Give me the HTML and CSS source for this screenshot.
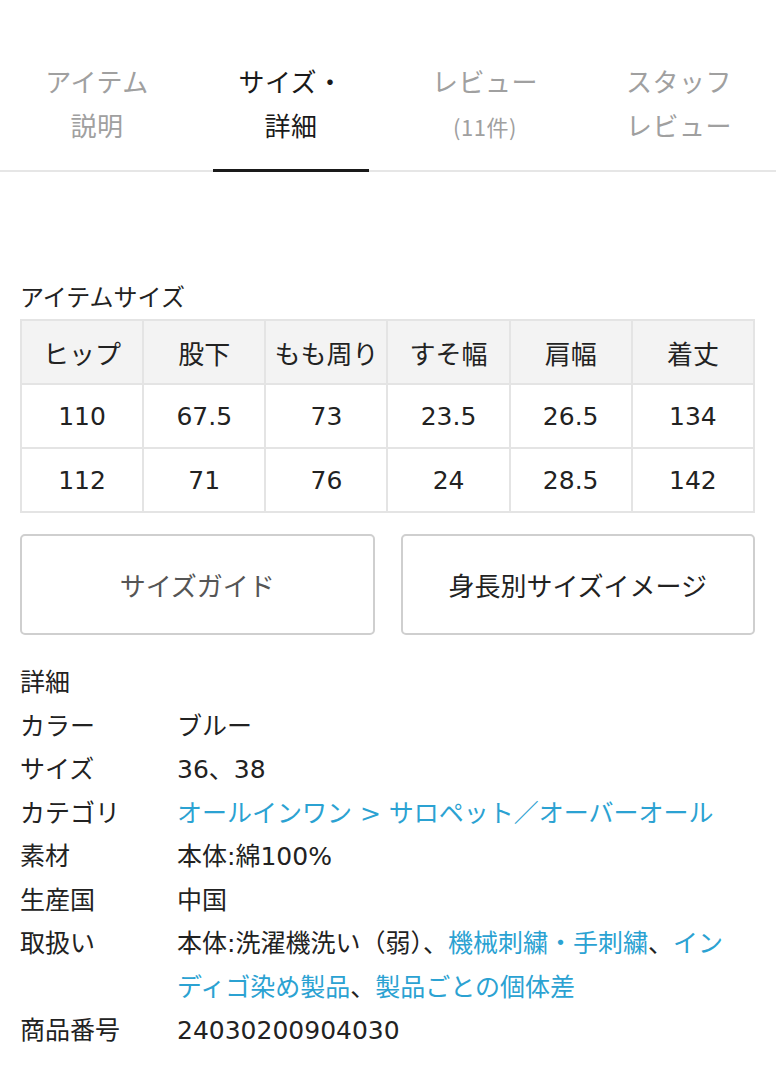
FILE: index.html
```html
<!DOCTYPE html>
<html lang="ja">
<head>
<meta charset="utf-8">
<title>サイズ・詳細</title>
<link rel="stylesheet" href="styles.css">
</head>
<body>
<nav class="tabs">
  <div class="tab">アイテム<br>説明</div>
  <div class="tab active">サイズ・<br>詳細</div>
  <div class="tab">レビュー<br><span class="count">(11件)</span></div>
  <div class="tab">スタッフ<br>レビュー</div>
</nav>

<section class="sizes">
  <h2 class="heading">アイテムサイズ</h2>
  <table class="size-table">
    <thead>
      <tr><th>ヒップ</th><th>股下</th><th>もも周り</th><th>すそ幅</th><th>肩幅</th><th>着丈</th></tr>
    </thead>
    <tbody>
      <tr><td>110</td><td>67.5</td><td>73</td><td>23.5</td><td>26.5</td><td>134</td></tr>
      <tr><td>112</td><td>71</td><td>76</td><td>24</td><td>28.5</td><td>142</td></tr>
    </tbody>
  </table>
  <div class="buttons">
    <div class="btn btn-guide">サイズガイド</div>
    <div class="btn">身長別サイズイメージ</div>
  </div>
</section>

<section class="details">
  <h2 class="heading details-title">詳細</h2>
  <dl class="spec">
    <dt>カラー</dt><dd>ブルー</dd>
    <dt>サイズ</dt><dd>36、38</dd>
    <dt>カテゴリ</dt><dd><a class="link">オールインワン &gt; サロペット／オーバーオール</a></dd>
    <dt>素材</dt><dd>本体:綿100%</dd>
    <dt>生産国</dt><dd>中国</dd>
    <dt>取扱い</dt><dd>本体:洗濯機洗い（弱）、<a class="link">機械刺繍・手刺繍</a>、<a class="link">インディゴ染め製品</a>、<a class="link">製品ごとの個体差</a></dd>
    <dt>商品番号</dt><dd>24030200904030</dd>
  </dl>
</section>
</body>
</html>
```

FILE: styles.css
```css
html, body {
  margin: 0;
  padding: 0;
  background: #ffffff;
}
body {
  font-family: "DejaVu Sans", "Noto Sans CJK JP", sans-serif;
  color: #222222;
  width: 776px;
}
.tabs {
  display: grid;
  grid-template-columns: repeat(4, 1fr);
  border-bottom: 2px solid #e6e6e6;
  padding-top: 59px;
}
.tab {
  position: relative;
  text-align: center;
  font-family: "Noto Sans CJK JP", sans-serif;
  font-size: 26px;
  line-height: 44px;
  color: #a0a0a0;
  padding-bottom: 22px;
  letter-spacing: 0.5px;
}
.tab .count {
  font-size: 22px;
}
.tab.active {
  color: #1a1a1a;
}
.tab.active::after {
  content: "";
  position: absolute;
  left: 19px;
  right: 19px;
  bottom: -2px;
  height: 3px;
  background: #1a1a1a;
}
.sizes {
  padding: 0 21px 0 20px;
}
.heading {
  margin: 0;
  font-weight: normal;
  font-size: 24px;
  line-height: 34px;
  color: #222222;
}
.sizes .heading {
  margin-top: 109px;
  margin-bottom: 4px;
}
.size-table {
  width: 100%;
  border-collapse: collapse;
  table-layout: fixed;
  border: 2px solid #e4e4e4;
}
.size-table th,
.size-table td {
  border: 2px solid #e4e4e4;
  height: 62px;
  padding: 0;
  text-align: center;
  font-size: 25px;
  font-weight: normal;
  color: #222222;
}
.size-table th {
  background: #f3f3f3;
  font-size: 26px;
}
.buttons {
  display: grid;
  grid-template-columns: 1fr 1fr;
  gap: 26px;
  margin-top: 21px;
}
.btn {
  box-sizing: border-box;
  height: 101px;
  border: 2px solid #cfcfcf;
  border-radius: 5px;
  display: flex;
  align-items: center;
  justify-content: center;
  font-size: 26px;
  color: #222222;
}
.btn-guide {
  color: #555555;
}
.details {
  padding: 0 21px 0 20px;
  margin-top: 26px;
}
.details-title {
  font-size: 25px;
  line-height: 43.5px;
}
.spec {
  margin: 0;
  display: grid;
  grid-template-columns: 157px 1fr;
  font-size: 25px;
  line-height: 43.5px;
  line-break: strict;
}
.spec dt,
.spec dd {
  margin: 0;
}
.link {
  color: #2ba2d2;
  text-decoration: none;
}
```
